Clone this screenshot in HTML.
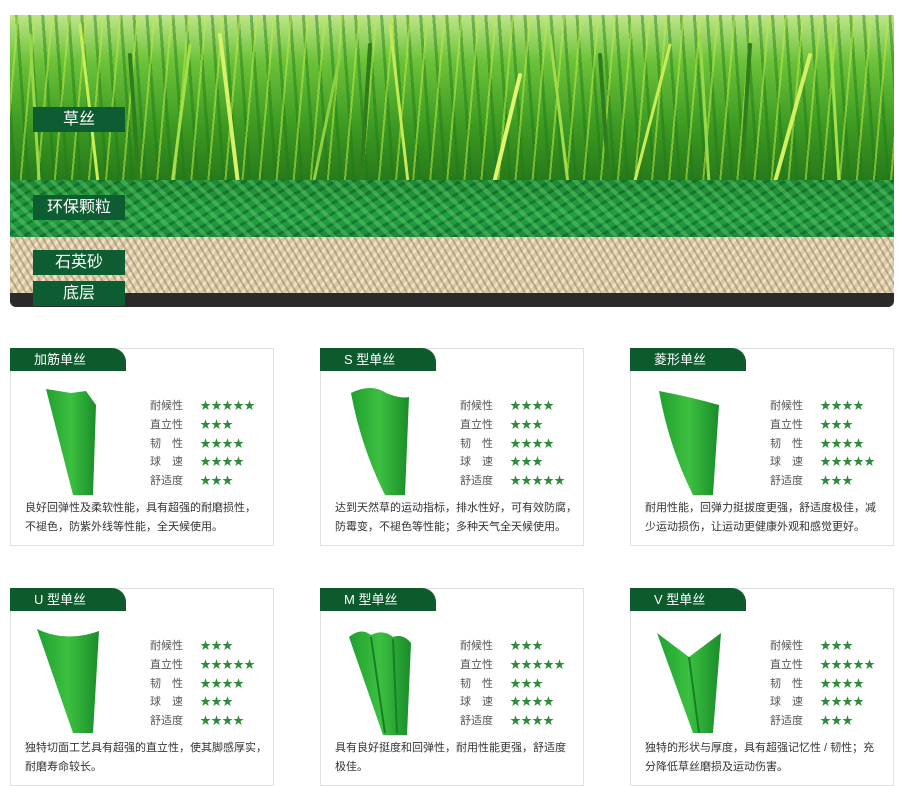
<!DOCTYPE html>
<html><head><meta charset="utf-8"><style>
body{margin:0;width:903px;height:782px;background:#fff;position:relative;overflow:hidden;font-family:"Liberation Sans","Noto Sans CJK SC",sans-serif}
.hero{position:absolute;left:10px;top:15px;width:884px;height:292px;overflow:hidden;background:#fff}
.grass{position:absolute;left:0;top:0;width:100%;height:185px;background:
repeating-linear-gradient(95deg,rgba(0,0,0,0) 0 7px,rgba(190,235,70,.55) 7px 9px,rgba(0,0,0,0) 9px 17px),
repeating-linear-gradient(86deg,rgba(0,0,0,0) 0 5px,rgba(30,120,20,.45) 5px 8px,rgba(0,0,0,0) 8px 13px),
linear-gradient(#bfe58a 0,#6cc23a 25%,#3d9a22 60%,#1f6e18 100%)}
.gran{position:absolute;left:0;top:165px;width:100%;height:75px;background:
repeating-linear-gradient(45deg,rgba(120,220,120,.35) 0 4px,rgba(0,0,0,0) 4px 10px),
repeating-linear-gradient(-30deg,rgba(0,60,20,.35) 0 3px,rgba(0,0,0,0) 3px 9px),
linear-gradient(#1e8a34,#23a043 50%,#16733a)}
.sand{position:absolute;left:0;top:222px;width:100%;height:66px;background:
repeating-linear-gradient(60deg,rgba(120,80,40,.35) 0 2px,rgba(0,0,0,0) 2px 6px),
repeating-linear-gradient(-50deg,rgba(255,250,235,.5) 0 3px,rgba(0,0,0,0) 3px 7px),
#d9c9a6}
.base{position:absolute;left:0;top:278px;width:100%;height:14px;background:#2a2a2a;border-radius:0 0 6px 6px}
.lab{position:absolute;left:23px;width:92px;background:#0e5c32;color:#fff;font-size:16px;text-align:center;line-height:25px;height:25px}
.card{position:absolute;width:262px;height:196px;border:1px solid #e0e0e0;background:#fff}
.tab{position:absolute;left:-1px;top:-1px;width:116px;height:23px;background:#0d5a2c;border-radius:0 14px 0 0;color:#fff;font-size:13px;line-height:23px;padding-left:24px;box-sizing:border-box}
.shape{position:absolute;left:20px;top:38px}
.rows{position:absolute;left:139px;top:48px;font-size:11px;color:#555}
.rows div{height:18.8px;line-height:18.8px;white-space:nowrap}
.rows span{display:inline-block;width:50px}
.rows b{color:#2e8b3a;font-weight:normal;font-size:11px;letter-spacing:0}
.desc{position:absolute;left:14px;top:150px;width:250px;font-size:11px;line-height:19px;color:#333;white-space:nowrap}
</style></head><body>
<div class="hero">
<div class="grass"></div>
<svg style="position:absolute;left:0;top:0" width="884" height="190">
<g stroke-linecap="round" fill="none">
<path d="M30 180 L20 20" stroke="#9ad84a" stroke-width="3"/><path d="M90 185 L70 10" stroke="#c8ee5a" stroke-width="3"/>
<path d="M160 185 L180 30" stroke="#a5e04a" stroke-width="3"/><path d="M230 185 L210 20" stroke="#d7f26a" stroke-width="4"/>
<path d="M300 185 L330 40" stroke="#8fd040" stroke-width="3"/><path d="M400 185 L380 10" stroke="#c4ea55" stroke-width="3"/>
<path d="M480 185 L510 60" stroke="#e0f570" stroke-width="4"/><path d="M560 185 L540 20" stroke="#a2dc48" stroke-width="3"/>
<path d="M620 185 L660 30" stroke="#c9ec58" stroke-width="3"/><path d="M700 185 L690 20" stroke="#9ad84a" stroke-width="3"/>
<path d="M760 185 L800 40" stroke="#d2f062" stroke-width="4"/><path d="M830 185 L820 15" stroke="#a5e04a" stroke-width="3"/>
<path d="M130 185 L120 40" stroke="#2f7d1c" stroke-width="4"/><path d="M350 185 L360 30" stroke="#2f7d1c" stroke-width="4"/>
<path d="M600 185 L590 40" stroke="#2f7d1c" stroke-width="4"/><path d="M730 185 L740 30" stroke="#2f7d1c" stroke-width="4"/>
</g></svg>
<div class="gran"></div>
<div class="sand"></div>
<div class="base"></div>
<div class="lab" style="top:92px">草丝</div>
<div class="lab" style="top:180px">环保颗粒</div>
<div class="lab" style="top:235px">石英砂</div>
<div class="lab" style="top:266px">底层</div>
</div>

<svg width="0" height="0" style="position:absolute"><defs>
<linearGradient id="g" x1="0" x2="1"><stop offset="0" stop-color="#20a030"/><stop offset=".5" stop-color="#3cc040"/><stop offset="1" stop-color="#1a8c2a"/></linearGradient></defs></svg>

<div class="card" style="left:10px;top:348px"><div class="tab">加筋单丝</div>
<svg class="shape" width="80" height="110"><path d="M15 2 L40 6 L55 4 L65 18 L62 108 L42 108 Z" fill="url(#g)"/></svg>
<div class="rows"><div><span>耐候性</span><b>★★★★★</b></div><div><span>直立性</span><b>★★★</b></div><div><span>韧　性</span><b>★★★★</b></div><div><span>球　速</span><b>★★★★</b></div><div><span>舒适度</span><b>★★★</b></div></div>
<div class="desc">良好回弹性及柔软性能，具有超强的耐磨损性，<br>不褪色，防紫外线等性能，全天候使用。</div></div>

<div class="card" style="left:320px;top:348px"><div class="tab">S 型单丝</div>
<svg class="shape" width="80" height="110"><path d="M10 6 Q30 -4 45 6 Q60 12 68 10 L64 108 L44 108 Q20 60 10 6 Z" fill="url(#g)"/></svg>
<div class="rows"><div><span>耐候性</span><b>★★★★</b></div><div><span>直立性</span><b>★★★</b></div><div><span>韧　性</span><b>★★★★</b></div><div><span>球　速</span><b>★★★</b></div><div><span>舒适度</span><b>★★★★★</b></div></div>
<div class="desc">达到天然草的运动指标，排水性好，可有效防腐，<br>防霉变，不褪色等性能；多种天气全天候使用。</div></div>

<div class="card" style="left:630px;top:348px"><div class="tab">菱形单丝</div>
<svg class="shape" width="80" height="110"><path d="M8 4 Q40 10 68 18 L62 108 L42 108 Q18 60 8 4 Z" fill="url(#g)"/></svg>
<div class="rows"><div><span>耐候性</span><b>★★★★</b></div><div><span>直立性</span><b>★★★</b></div><div><span>韧　性</span><b>★★★★</b></div><div><span>球　速</span><b>★★★★★</b></div><div><span>舒适度</span><b>★★★</b></div></div>
<div class="desc">耐用性能，回弹力挺拔度更强，舒适度极佳，减<br>少运动损伤，让运动更健康外观和感觉更好。</div></div>

<div class="card" style="left:10px;top:588px"><div class="tab">U 型单丝</div>
<svg class="shape" width="80" height="110"><path d="M6 2 Q35 16 68 4 L62 106 L42 106 Z" fill="url(#g)"/></svg>
<div class="rows"><div><span>耐候性</span><b>★★★</b></div><div><span>直立性</span><b>★★★★★</b></div><div><span>韧　性</span><b>★★★★</b></div><div><span>球　速</span><b>★★★</b></div><div><span>舒适度</span><b>★★★★</b></div></div>
<div class="desc">独特切面工艺具有超强的直立性，使其脚感厚实，<br>耐磨寿命较长。</div></div>

<div class="card" style="left:320px;top:588px"><div class="tab">M 型单丝</div>
<svg class="shape" width="80" height="110"><path d="M8 10 Q20 0 30 8 Q42 2 52 10 Q62 6 70 16 L66 108 L42 108 Z" fill="url(#g)"/><path d="M30 10 L44 106 M52 12 L56 106" stroke="#168024" stroke-width="2"/></svg>
<div class="rows"><div><span>耐候性</span><b>★★★</b></div><div><span>直立性</span><b>★★★★★</b></div><div><span>韧　性</span><b>★★★</b></div><div><span>球　速</span><b>★★★★</b></div><div><span>舒适度</span><b>★★★★</b></div></div>
<div class="desc">具有良好挺度和回弹性，耐用性能更强，舒适度<br>极佳。</div></div>

<div class="card" style="left:630px;top:588px"><div class="tab">V 型单丝</div>
<svg class="shape" width="80" height="110"><path d="M6 6 L38 30 L70 6 L62 106 L42 106 Z" fill="url(#g)"/><path d="M38 30 L48 106" stroke="#168024" stroke-width="2"/></svg>
<div class="rows"><div><span>耐候性</span><b>★★★</b></div><div><span>直立性</span><b>★★★★★</b></div><div><span>韧　性</span><b>★★★★</b></div><div><span>球　速</span><b>★★★★</b></div><div><span>舒适度</span><b>★★★</b></div></div>
<div class="desc">独特的形状与厚度，具有超强记忆性 / 韧性；充<br>分降低草丝磨损及运动伤害。</div></div>
</body></html>
